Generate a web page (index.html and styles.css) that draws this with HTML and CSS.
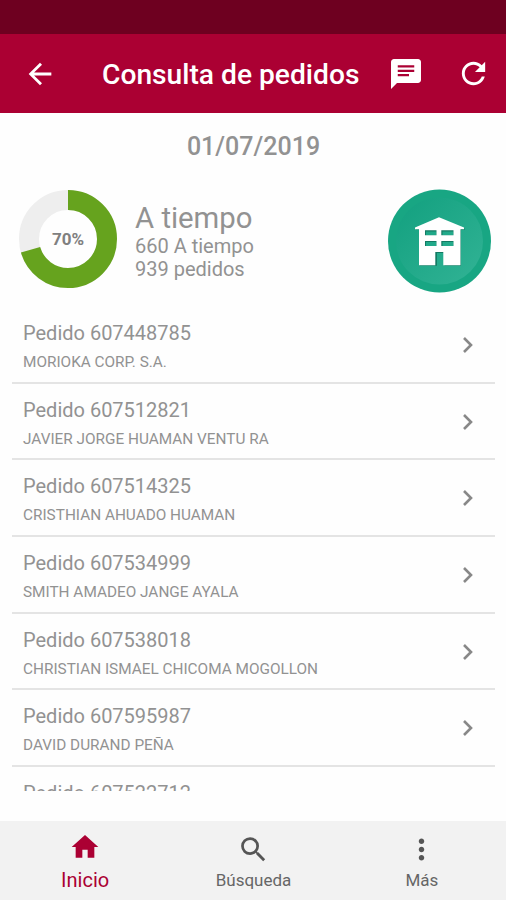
FILE: index.html
```html
<!DOCTYPE html>
<html lang="es">
  <head>
    <meta charset="UTF-8" />
    <meta name="viewport" content="width=device-width, initial-scale=1.0" />
    <title>Consulta de pedidos</title>
    <link rel="stylesheet" href="styles.css">
  </head>
  <body>
    <div class="status-bar"></div>
    <header class="header">
      <svg class="back" viewBox="0 0 24 24" width="34" height="34">
        <path d="M20 11H7.83l5.59-5.59L12 4l-8 8 8 8 1.41-1.41L7.83 13H20v-2z" />
      </svg>
      <h1 class="title">Consulta de pedidos</h1>
      <svg class="chat" viewBox="0 0 24 24" width="36" height="36">
        <path d="M20 2H4c-1.1 0-1.99.9-1.99 2L2 22l4-4h14c1.1 0 2-.9 2-2V4c0-1.1-.9-2-2-2zM6.500 9.100h11v1.500h-11V9.100zm7.500 4.400H6.500V12H14v1.500zm3.500-5.800h-11V6.200h11v1.500z" />
      </svg>
      <svg class="refresh" viewBox="0 0 24 24" width="35" height="35">
        <path d="M17.65 6.35C16.2 4.9 14.21 4 12 4c-4.42 0-7.99 3.58-7.99 8s3.57 8 7.99 8c3.73 0 6.84-2.55 7.73-6h-2.08c-.82 2.33-3.04 4-5.65 4-3.31 0-6-2.69-6-6s2.69-6 6-6c1.66 0 3.14.69 4.22 1.78L13 11h7V4l-2.35 2.35z" />
      </svg>
    </header>

    <main class="content">
      <p class="date">01/07/2019</p>

      <section class="summary">
        <svg class="donut" viewBox="0 0 98 98" width="98" height="98">
          <circle class="donut-track" cx="49" cy="49" r="39" />
          <circle class="donut-value" cx="49" cy="49" r="39" pathLength="100" transform="rotate(-90 49 49)" />
          <text class="donut-label" x="49" y="55">70%</text>
        </svg>
        <div class="summary-text">
          <h2 class="summary-title">A tiempo</h2>
          <p class="summary-line">660 A tiempo</p>
          <p class="summary-line">939 pedidos</p>
        </div>
        <svg class="store" viewBox="0 0 104 104" width="104" height="104">
          <defs>
            <linearGradient id="disc" x1="0" y1="0" x2="1" y2="1">
              <stop offset="0" stop-color="#12a07f" />
              <stop offset="1" stop-color="#32b395" />
            </linearGradient>
          </defs>
          <circle cx="52.5" cy="52" r="51.5" fill="#18a683" />
          <circle cx="52.5" cy="52" r="43.5" fill="url(#disc)" />
          <path class="house-shadow" d="M52.500 29.200L77.500 39.500v1.500H74v35.800H57.500V64H50v12.800H32.500V40.500H29v-1.300zM39 42.500v4h10.500v-4zm16.500 0v4h11v-4zM39 53v4h10.500v-4zm16.500 0v4h11v-4z" />
          <path class="house" d="M52 28.200L77 38.400v1.800h-3.500v36H56.300V63h-8v13.200H32V40.200h-4v-1.800zM38 41.200v5h11.500v-5zm16.300 0v5h12.200v-5zM38 52v5h11.500v-5zm16.300 0v5h12.200v-5z" />
        </svg>
      </section>

      <ul class="orders">
        <li class="order">
          <div>
            <h3 class="order-number">Pedido 607448785</h3>
            <p class="customer">MORIOKA CORP. S.A.</p>
          </div>
          <svg class="chevron" viewBox="0 0 12 18" width="12" height="18"><path d="M2 2l7 7-7 7" /></svg>
        </li>
        <li class="order">
          <div>
            <h3 class="order-number">Pedido 607512821</h3>
            <p class="customer">JAVIER JORGE HUAMAN VENTU RA</p>
          </div>
          <svg class="chevron" viewBox="0 0 12 18" width="12" height="18"><path d="M2 2l7 7-7 7" /></svg>
        </li>
        <li class="order">
          <div>
            <h3 class="order-number">Pedido 607514325</h3>
            <p class="customer">CRISTHIAN AHUADO HUAMAN</p>
          </div>
          <svg class="chevron" viewBox="0 0 12 18" width="12" height="18"><path d="M2 2l7 7-7 7" /></svg>
        </li>
        <li class="order">
          <div>
            <h3 class="order-number">Pedido 607534999</h3>
            <p class="customer">SMITH AMADEO JANGE AYALA</p>
          </div>
          <svg class="chevron" viewBox="0 0 12 18" width="12" height="18"><path d="M2 2l7 7-7 7" /></svg>
        </li>
        <li class="order">
          <div>
            <h3 class="order-number">Pedido 607538018</h3>
            <p class="customer">CHRISTIAN ISMAEL CHICOMA MOGOLLON</p>
          </div>
          <svg class="chevron" viewBox="0 0 12 18" width="12" height="18"><path d="M2 2l7 7-7 7" /></svg>
        </li>
        <li class="order">
          <div>
            <h3 class="order-number">Pedido 607595987</h3>
            <p class="customer">DAVID DURAND PEÑA</p>
          </div>
          <svg class="chevron" viewBox="0 0 12 18" width="12" height="18"><path d="M2 2l7 7-7 7" /></svg>
        </li>
        <li class="order">
          <div>
            <h3 class="order-number">Pedido 607522712</h3>
          </div>
        </li>
      </ul>
    </main>

    <nav class="tabs">
      <a class="tab active">
        <svg viewBox="0 0 24 24" width="32" height="32"><path d="M10 20v-6h4v6h5v-8h3L12 3 2 12h3v8z" /></svg>
        <span>Inicio</span>
      </a>
      <a class="tab">
        <svg viewBox="0 0 24 24" width="33" height="33"><path d="M15.500 14h-.79l-.28-.27A6.470 6.470 0 0 0 16 9.500 6.500 6.500 0 1 0 9.500 16c1.610 0 3.090-.59 4.230-1.570l.27.28v.79l5 4.990L20.490 19l-4.990-5zm-6 0C7.010 14 5 11.990 5 9.500S7.010 5 9.500 5 14 7.010 14 9.500 11.990 14 9.500 14z" /></svg>
        <span>Búsqueda</span>
      </a>
      <a class="tab">
        <svg viewBox="0 0 24 24" width="33" height="33"><path d="M12 8c1.100 0 2-.9 2-2s-.9-2-2-2-2 .9-2 2 .9 2 2 2zm0 2c-1.100 0-2 .9-2 2s.9 2 2 2 2-.9 2-2-.9-2-2-2zm0 6c-1.100 0-2 .9-2 2s.9 2 2 2 2-.9 2-2-.9-2-2-2z" /></svg>
        <span>Más</span>
      </a>
    </nav>
  </body>
</html>
```

FILE: styles.css
```css
* {
  box-sizing: border-box;
  margin: 0;
  padding: 0;
}

body {
  display: flex;
  flex-direction: column;
  height: 900px;
  overflow: hidden;
  font-family: Roboto, "Liberation Sans", sans-serif;
  background-color: #fefefe;
  color: #929292;
}

.status-bar {
  flex: none;
  height: 34px;
  background-color: #6e0020;
}

.header {
  display: flex;
  flex: none;
  align-items: center;
  height: 79px;
  padding: 0 15px 0 23px;
  background-color: #ab0033;
  fill: #fff;
}

.title {
  margin: 3px 0 0 45px;
  font-size: 28.2px;
  font-weight: 500;
  line-height: 32px;
  white-space: nowrap;
  color: #fff;
}

.chat {
  margin-left: auto;
}

.refresh {
  margin-left: 32px;
}

.content {
  flex: none;
  height: 678px;
  overflow: hidden;
}

.date {
  padding: 19px 0 0 1px;
  text-align: center;
  font-size: 25px;
  font-weight: 500;
  line-height: 30px;
}

.summary {
  display: flex;
  align-items: center;
  height: 104px;
  margin-top: 27px;
  padding: 0 15px 0 19px;
}

.donut {
  margin-top: -4px;
}

.donut circle {
  fill: none;
  stroke-width: 20;
}

.donut-track {
  stroke: #eeeeee;
}

.donut-value {
  stroke: #66a31e;
  stroke-dasharray: 70.5 100;
}

.donut-label {
  font-size: 17px;
  font-weight: 700;
  text-anchor: middle;
  fill: #808080;
}

.summary-text {
  margin: 0 0 0 18px;
}

.summary-title {
  font-size: 29.3px;
  font-weight: 400;
  line-height: 34px;
}

.summary-line {
  font-size: 20px;
  line-height: 23px;
}

.store {
  margin-left: auto;
}

.house {
  fill: #fff;
  fill-rule: evenodd;
}

.house-shadow {
  fill: #147a63;
  fill-rule: evenodd;
}

.orders {
  margin: 14px 11px 0 12px;
  list-style: none;
}

.order {
  display: flex;
  justify-content: space-between;
  height: 76.7px;
  padding: 12px 21px 0 11px;
  border-bottom: 2px solid #e4e4e4;
}

.order-number {
  font-size: 20px;
  font-weight: 400;
  line-height: 28px;
}

.customer {
  font-size: 15.35px;
  line-height: 31px;
}

.chevron {
  margin-top: 17px;
  fill: none;
  stroke: #888;
  stroke-width: 2.6;
}

.tabs {
  display: grid;
  grid-template-columns: repeat(3, 1fr);
  height: 79px;
  margin-top: auto;
  padding-left: 1px;
  background-color: #f2f2f2;
}

.tab {
  display: flex;
  flex-direction: column;
  align-items: center;
  padding-top: 12px;
  font-size: 17px;
  line-height: 29px;
  color: #666;
  fill: #555;
}

.tab.active {
  padding-top: 10px;
  font-size: 20px;
  line-height: 34px;
  color: #ab0033;
  fill: #ab0033;
}
```
